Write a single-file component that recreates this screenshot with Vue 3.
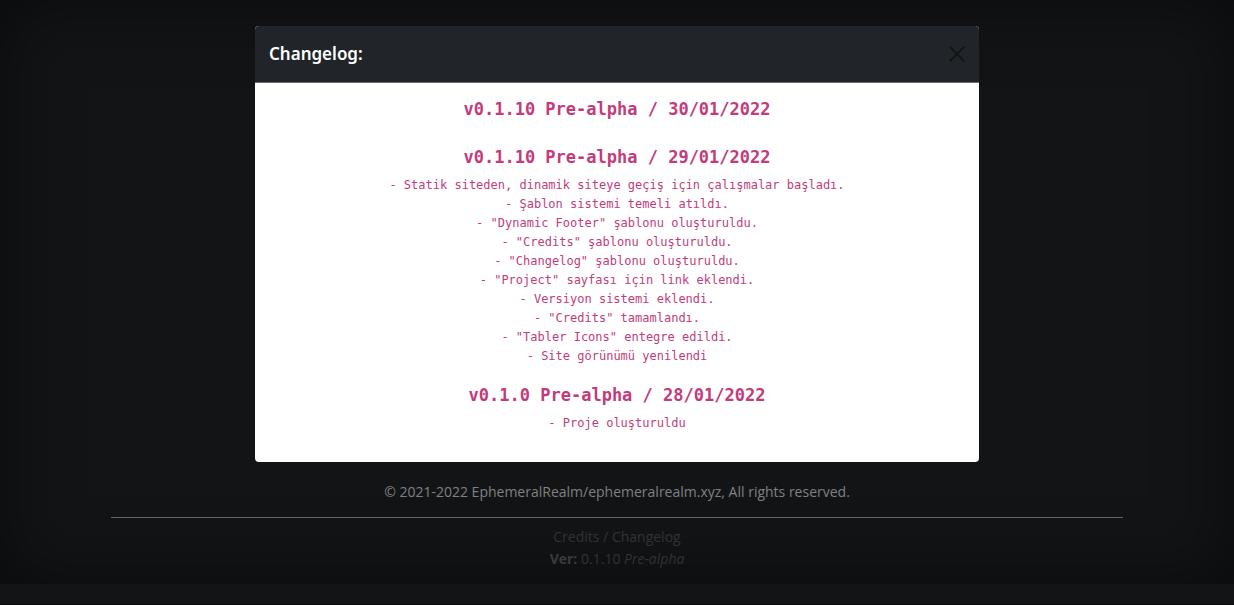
<script setup>
const releases = [
  { title: 'v0.1.10 Pre-alpha / 30/01/2022', items: [] },
  {
    title: 'v0.1.10 Pre-alpha / 29/01/2022',
    items: [
      'Statik siteden, dinamik siteye geçiş için çalışmalar başladı.',
      'Şablon sistemi temeli atıldı.',
      '"Dynamic Footer" şablonu oluşturuldu.',
      '"Credits" şablonu oluşturuldu.',
      '"Changelog" şablonu oluşturuldu.',
      '"Project" sayfası için link eklendi.',
      'Versiyon sistemi eklendi.',
      '"Credits" tamamlandı.',
      '"Tabler Icons" entegre edildi.',
      'Site görünümü yenilendi',
    ],
  },
  { title: 'v0.1.0 Pre-alpha / 28/01/2022', items: ['Proje oluşturuldu'] },
]
</script>

<template>
  <div class="page">
    <div class="cover">
      <footer class="footer">
        <p class="copyright">© 2021-2022 EphemeralRealm/ephemeralrealm.xyz, All rights reserved.</p>
        <hr class="rule" />
        <p class="meta"><a href="#credits">Credits</a> / <a href="#changelog">Changelog</a></p>
        <p class="meta"><strong>Ver:</strong> 0.1.10 <em>Pre-alpha</em></p>
      </footer>
    </div>
  </div>

  <div class="overlay">
    <section class="modal" role="dialog" aria-modal="true" aria-labelledby="changelog-title">
      <header class="modal-header">
        <h1 id="changelog-title" class="modal-title">Changelog:</h1>
        <button class="close" type="button" aria-label="Close">
          <svg viewBox="0 0 16 16" width="16" height="16" aria-hidden="true">
            <path d="M1.2 1.2 14.8 14.8M14.8 1.2 1.2 14.8" fill="none" stroke="currentColor" stroke-width="1.8" stroke-linecap="round" />
          </svg>
        </button>
      </header>
      <div class="modal-body">
        <article v-for="release in releases" :key="release.title" class="release">
          <h2>{{ release.title }}</h2>
          <ul v-if="release.items.length">
            <li v-for="item in release.items" :key="item">- {{ item }}</li>
          </ul>
        </article>
      </div>
    </section>
  </div>
</template>

<style>
body {
  margin: 0;
  background: #131416;
}
</style>

<style scoped>
.page {
  box-sizing: border-box;
  display: flex;
  flex-direction: column;
  min-height: 100vh;
  padding-bottom: 20px;
  border-bottom: 1px solid #08080a;
  font-family: "Segoe UI", "Open Sans", sans-serif;
  font-size: 14px;
  line-height: 22px;
}
.cover {
  flex: 1;
  display: flex;
  flex-direction: column;
  justify-content: flex-end;
  box-shadow: inset 0 0 72px rgba(0, 0, 0, 0.5);
}
.footer {
  width: 82%;
  margin: 0 auto;
  padding-bottom: 14px;
  text-align: center;
  color: #808182;
}
.footer p {
  margin: 0;
}
.rule {
  height: 1px;
  margin: 14px 0 8px;
  border: 0;
  background: #616263;
}
.footer .meta {
  color: #303335;
}
.meta a {
  color: inherit;
  text-decoration: none;
}
.meta strong {
  color: #363d42;
}
.overlay {
  position: absolute;
  top: 0;
  left: 0;
  right: 0;
  display: flex;
  justify-content: center;
  padding: 26px 16px;
}
.modal {
  width: 100%;
  max-width: 724px;
  border-radius: 4px;
  overflow: hidden;
  background: #fff;
}
.modal-header {
  display: flex;
  align-items: center;
  justify-content: space-between;
  padding: 14px;
  border-bottom: 1px solid #6b6d70;
  background: #212529;
  color: #fff;
  font-family: "Segoe UI", "Noto Sans", sans-serif;
}
.modal-title {
  margin: 0;
  font-size: 17px;
  font-weight: 600;
  line-height: 28px;
}
.close {
  display: flex;
  padding: 0;
  border: 0;
  background: none;
  color: #111315;
}
.modal-body {
  display: flex;
  flex-direction: column;
  gap: 18px;
  padding: 15px 14px 29px;
  font-family: Consolas, "DejaVu Sans Mono", monospace;
  font-size: 12px;
  line-height: 19px;
  text-align: center;
  color: #c23c7b;
}
.release {
  display: flow-root;
}
.release h2 {
  margin: 0 0 8px;
  font-size: 17px;
  font-weight: 600;
  line-height: 22px;
}
.release ul {
  margin: 0;
  padding: 0;
  list-style: none;
}
</style>
